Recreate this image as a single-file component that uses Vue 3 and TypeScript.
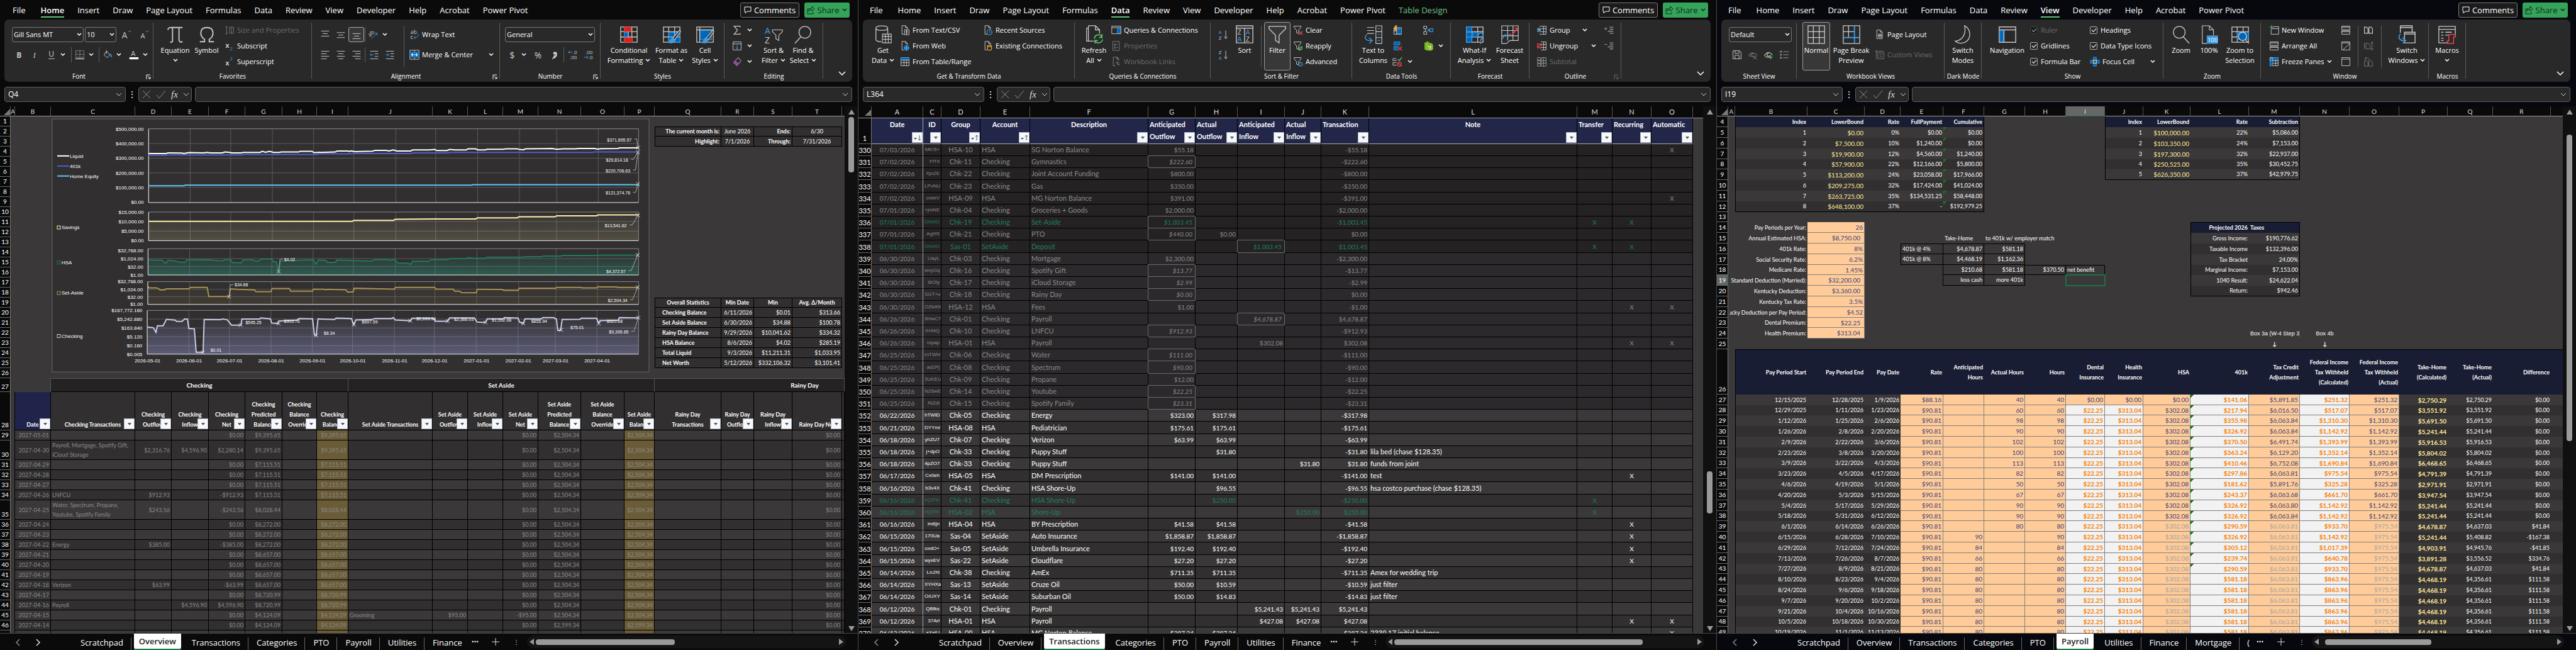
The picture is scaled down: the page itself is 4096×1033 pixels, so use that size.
<script setup lang="ts">
interface Cell { t: string; k: string; s: number; f: string }
interface Row { n: string; k: string; cells: Cell[] }
interface Tool { w?: number; i?: string; l?: string; chev?: boolean; off?: boolean; on?: boolean; kind?: string; name?: string }
interface Col { t: string; w: number; i?: string; lines?: string[]; chev?: boolean; box?: boolean; items?: Tool[]; rows?: Tool[][] }
interface Group { name: string; w: number; pad: number; launch?: string; cols: Col[] }
interface Win {
  id: string; active: string; tabs: string[]; groups: Group[]; ref: string
  cols: number[]; letters: string[]; rows: Row[]; sel: string
  sheet: string; sheets: string[]; more: string; vTop: number; vSize: number; hStart: number; hSize: number
}

/* ---------- icons ---------- */
const G = '#c8c8c8', B = '#3d9be0', F = '#0067b8', R = '#e5484d', N = '#5ec269', D = '#777'
const p = (d: string, c = G, w = 1.2, f = 'none') => `<path d="${d}" stroke="${c}" stroke-width="${w}" fill="${f}"/>`
const tx = (x: number, y: number, s: number, v: string, c = G, more = '') =>
  `<text x="${x}" y="${y}" font-size="${s}" fill="${c}" font-family="Open Sans, sans-serif" ${more}>${v}</text>`
const doc = p('M4 1h7l4 4v3M4 1v17h4M11 1v4h4')
const grid3 = (c = G) => p('M2 3h28v26H2zM11 3v26M21 3v26M2 11h28M2 20h28', c, 1.4)
const funnel = p('M2 2h14v2l-5 6v7l-4-2v-5L2 4z')
const brush = p('M30 8L18 22l3 3L31 11z', G, 1.3, '#292929') + p('M17 22c-4 0-3 6-7 7c5 3 11 1 11-4z', B, 1, B)
const lines = (a: number[][]) => p(a.map(([x, y, w]) => `M${x} ${y}h${w}`).join(''))
const small: Record<string, string> = {
  grow: tx(1, 17, 17, 'A') + p('M14 5l2.500-3l2.500 3', B),
  shrink: tx(3, 17, 14, 'A') + p('M14 2l2.500 3l2.500-3', B),
  bold: tx(4, 16, 15, 'B', G, 'font-weight="700"'),
  italic: tx(6, 16, 15, 'I', G, 'font-style="italic" style="font-family:Liberation Serif,serif"'),
  under: tx(4, 14, 15, 'U') + p('M4 18h12'),
  border: p('M2 2h16v13H2zM10 2v14M2 9h16', G, 1.2).replace('/>', ' stroke-dasharray="1.500 1.500"/>') + p('M1 18h18', G, 1.8),
  bucket: p('M8 3l7 7l-6 6l-6-6zM8 1v7') + p('M15 9c3 1 3 4 2 6', B, 2),
  fontcolor: tx(4, 13, 14, 'A') + p('M1 17h18', '#fff', 4),
  size: p('M4 2v16M2 4l2-2l2 2M2 16l2 2l2-2M10 4h8v12h-8zM14 4v12', D),
  sub: tx(2, 14, 13, 'x', G, 'font-weight="700"') + tx(11, 19, 9, '2', B),
  sup: tx(2, 17, 13, 'x', G, 'font-weight="700"') + tx(11, 8, 9, '2', B),
  top: lines([[2, 3, 16], [5, 8, 10], [2, 13, 16]]), mid: lines([[2, 6, 16], [5, 11, 10], [2, 16, 16]]),
  bot: lines([[2, 8, 16], [5, 13, 10], [2, 18, 16]]),
  orient: tx(0, 12, 11, 'ab', G, 'transform="rotate(-45 5 10)"') + p('M6 18L17 7M12 7h5v5', B),
  left: lines([[2, 3, 16], [2, 8, 11], [2, 13, 16], [2, 18, 11]]), center: lines([[2, 3, 16], [5, 8, 10], [2, 13, 16], [5, 18, 10]]),
  right: lines([[2, 3, 16], [7, 8, 11], [2, 13, 16], [7, 18, 11]]),
  outdent: lines([[2, 3, 16], [11, 8, 7], [11, 13, 7], [2, 18, 16]]) + p('M9 10H2M5 7l-3 3l3 3', B),
  indent: lines([[2, 3, 16], [11, 8, 7], [11, 13, 7], [2, 18, 16]]) + p('M1 10h7M5 7l3 3l-3 3', B),
  wrap: tx(2, 9, 11, 'ab') + tx(2, 19, 11, 'c') + p('M17 8c2 6-2 8-8 8M12 13l-3 3l3 3', B),
  merge: p('M1 1h18v18H1zM10 1v4M10 15v4', G) + p('M1 5h18v10H1z', B, 1, F) + p('M4 10h12M7 7l-3 3l3 3M13 7l3 3l-3 3', '#fff', 1.4),
  dollar: tx(4, 17, 18, '$'), percent: tx(1, 17, 17, '%'), comma: p('M12 5c3 4 1 9-4 11c2-3 2-4 2-5', G, 3) + `<circle cx="10" cy="7" r="3" fill="${G}"/>`,
  decinc: tx(10, 9, 10, '.0') + tx(4, 19, 10, '.00') + p('M9 5H1M4 2L1 5l3 3', B),
  decdec: tx(4, 9, 10, '.00') + tx(10, 19, 10, '.0') + p('M1 15h8M6 12l3 3l-3 3', B),
  sigma: p('M16 4V2H4l7 8l-7 8h12v-2', G, 1.5), fill: p('M2 2h16v16H2zM2 6h16') + p('M10 8v8M7 13l3 3l3-3', B),
  clear: p('M12 2l6 6l-8 10l-7-6z', G) + p('M6 8l7 6l-3 4l-7-6z', '#c050c8', 1, '#a13bab'),
  csv: doc + p('M9 9h9v10H9zM11 12h5M11 15h5M13 9v10'), web: doc + `<circle cx="13" cy="14" r="5" fill="${F}" stroke="${B}"/>` + p('M8 14h10M13 9v10', '#9bd0f5', 1),
  range: p('M2 2h16v16H2zM2 7h16M2 12h16M8 7v11M13 7v11') + p('M2 2h16v4H2z', B, 1, F),
  recent: doc + `<circle cx="13" cy="14" r="5" fill="#292929" stroke="${B}" stroke-width="1.500"/>` + p('M13 11v3h3', B),
  exist: doc + p('M9 10c0-2 8-2 8 0v7c0 2-8 2-8 0zM9 10c0 2 8 2 8 0', '#e8a33d', 1.5),
  queries: p('M1 2h18v15H1zM1 5h18') + p('M12 6h6v10h-6z', B, 1, F), props: p('M3 1h13v18H3zM6 6h3v3H6zM6 12h3v3H6zM11 7h3M11 13h3', D),
  links: p('M4 1h7l4 4v3M4 1v17h4M11 1v4h4M9 13c3-4 6-2 4 1M17 14c-3 4-6 2-4-1', D, 1.4),
  az: tx(1, 9, 10, 'A', B) + tx(1, 20, 10, 'Z') + p('M15 2v16M12 14l3 4l3-4'), za: tx(1, 9, 10, 'Z') + tx(1, 20, 10, 'A', B) + p('M15 2v16M12 14l3 4l3-4'),
  fclear: funnel + p('M12 12l7 7M19 12l-7 7', R, 1.6), freapply: funnel + p('M12 15c1-4 5-4 6-1M18 15c-1 4-5 4-6 1M18 11v3h-3M12 19v-3h3', N, 1.4),
  fadv: funnel + `<circle cx="15" cy="15" r="3.500" fill="none" stroke="${B}" stroke-width="2.500" stroke-dasharray="2 1"/>`,
  flash: p('M3 5h15v13H3zM8 5v13M13 5v13M3 11h15') + p('M9 8h9v9H9z', B, 1, F) + p('M6 1L3 8h3l-2 5l6-7H7l2-5z', '#f0b040', 1, '#f0b040'),
  dup: p('M3 2h12v6H3z', B, 1, F) + p('M3 11h7v7H3z', B, 1, F) + p('M11 11l8 8M19 11l-8 8', R, 1.6),
  valid: p('M8 4H1v4h8M8 12H1v5h7') + p('M11 5l3 3l5-7', N, 1.6) + `<circle cx="14" cy="15" r="4" fill="none" stroke="${R}" stroke-width="1.600"/>` + p('M11 12l6 6', R, 1.6),
  consol: p('M1 2h6v5H1zM1 13h6v5H1zM4 7v6') + p('M7 10h5M10 8l2 2l-2 2M13 7h6v6h-6z', B, 1.4),
  model: p('M3 4l7-3v18l-7-2z', '#7ab51d', 1, '#7ab51d') + p('M7 6c3-3 11-2 12 2v9c-3 3-9 2-12 0z', '#9bd33a', 1, '#76b01c') + p('M10 9v3h5V9M10 15h3M15 12v5', '#fff'),
  group: p('M8 2h5v16H8M13 2h5v16h-5M8 7h10M8 13h10M8 2H5M8 18H5') + p('M1 6h6v7H1z', B, 1.3) + p('M4 7v5M2 9h4', '#fff'),
  ungroup: p('M8 2h5v16H8M13 2h5v16h-5M8 7h10M8 13h10') + p('M1 6h7v8H1zM1 14l7-8', R, 1.6), subtotal: p('M1 2h6v5H1zM1 8h6v5H1zM1 14h6v5H1zM9 2h9v17H9zM9 8h9M9 13h9M13 2v17', '#999'),
  show: lines([[12, 4, 7], [12, 8, 7], [8, 12, 11], [12, 16, 7]]) + p('M1 7h6M4 4v6', '#999'), hide: lines([[12, 4, 7], [12, 8, 7], [8, 12, 11], [12, 16, 7]]) + p('M1 7h6', '#999'),
  save: p('M2 2h13l3 3v13H2zM6 2v5h8V2M6 18v-7h8v7'), eyex: p('M2 11c4-6 12-6 16 0M6 14c-2-1-3-2-4-3M10 8a3 3 0 1 0 3 4M11 12l7 7M18 12l-7 7', '#999'),
  eyeadd: p('M2 11c4-7 12-7 16 0M2 11c2 3 4 4 8 4M10 7a3 3 0 1 0 3 4', '#fff') + p('M14 11v8M10 15h8', N, 1.6),
  list: p('M2 3h3v2H2zM2 9h3v2H2zM2 15h3v2H2zM8 4h11M8 10h11M8 16h11', '#999'), page: doc + p('M15 8v10H8M7 9h6v6H7zM10 9v6M7 12h6'),
  custom: p('M3 1v18M1 3h17M6 6h12v12H6zM9 10h6M9 14h6', D), focus: p('M7 1h6v18H7zM1 7h18v6H1z', B, 1, F) + p('M7 7h6v6H7z', '#fff', 1, '#5b5520'),
  newwin: p('M8 3h11v15H4V9M4 7h15') + p('M5 0v9M1 4h8', N, 1.4), arrange: p('M2 2h16v7H2zM2 11h16v7H2zM2 4h16M2 13h16'),
  freeze: p('M2 2h16v16H2zM7 2v16M13 2v16M2 8h16M2 13h16') + p('M8 2h10v5H8zM2 8h5v10H2z', B, 1, F) + p('M4 0v8M0 2l8 4M8 2L0 6', B),
  split: p('M2 2h16v7H2zM2 11h16v7H2zM2 4h16M2 13h16'), hidew: p('M2 2h16v16H2zM2 4h16M4 18L18 5'), unhide: p('M2 2h16v16H2zM2 5h16'),
  side: p('M2 4h4l3 3v9H2zM11 4h4l3 3v9h-7z', G, 1.5), sync: p('M2 3v13M5 5h5l3 3v8H5zM17 2v16M15 5l2-3l2 3M15 15l2 3l2-3', D), reset: p('M2 8h4l3 3v8H2zM11 8h4l3 3v8h-7zM3 4c4-3 8-1 8 2M5 1L3 4l3 2', D),
}
const big: Record<string, string> = {
  pi: p('M3 8c1-4 3-4 6-4h19M11 4v23c0 2-2 2-4 2M22 4v21c0 4 3 4 6 3', G, 2), omega: p('M4 28h8v-4C3 18 3 4 16 4s13 14 4 20v4h8', G, 2),
  cond: grid3() + p('M8 3h12v8H8z', R, 1, '#d8231c') + p('M8 21h14v8H8z', R, 1, '#d8231c') + p('M8 12h7v8H8z', B, 1, F) + p('M15 11v10'),
  fmt: grid3() + p('M11 12h19v17H11z', B, 1, F) + p('M21 12v17M11 20h19') + brush, cell: p('M2 3h28v26H2zM2 8h28M7 3v26', G, 1.4) + p('M8 9h19v16H8z', B, 1, F) + brush,
  sort: tx(1, 15, 15, 'A', B) + tx(1, 31, 15, 'Z') + p('M14 8h17v3l-6 6v9l-5-3v-6l-6-6z'), find: `<circle cx="19" cy="12" r="10" fill="none" stroke="${G}" stroke-width="1.500"/>` + p('M12 20L2 31', G, 1.5),
  get: p('M4 5c0-5 20-5 20 0v9M4 5v19c0 3 5 4 9 4M4 5c0 5 20 5 20 0', G, 1.4) + p('M15 15h15v15H15zM15 19h15M15 24h15M20 15v15M25 15v15', G),
  refresh: p('M6 5h-3v22h12M6 1h12l7 7v6M6 1v26M18 1v7h7', G, 1.4) + p('M16 23c1-8 11-9 13-2M30 24c-1 7-10 8-13 2M29 15v6h-5M17 31v-5h5', N, 1.8),
  sortdlg: p('M2 1h28v29H2zM2 5h28M16 5v25', G, 1.5) + tx(4, 16, 11, 'Z') + tx(4, 28, 11, 'A', B) + tx(18, 16, 11, 'A', B) + tx(18, 28, 11, 'Z'),
  filter: p('M2 2h28v4L19 17v13l-6-4v-9L2 6z', G, 1.5), ttc: p('M5 4h12M5 9h12M5 14h12', G) + p('M20 1h10v30H20zM20 11h10M20 21h10', G) + p('M23 6h4M23 16h4M23 26h4', B) + p('M5 16c-6 5-3 11 8 10M8 21l6 5l-5 5', B, 1.5),
  whatif: grid3() + p('M2 3h9v8H2zM2 12h9v8H2zM2 20h9v9H2zM12 12h9v8h-9z', B, 1, F) + p('M22 17c1-6 9-5 8 1c0 4-4 4-4 9M26 30v2', B, 2),
  forecast: p('M2 1h28v25H16l-6 5H2zM12 1v25M21 1v25M2 9h28M2 18h28') + p('M3 23l5-7l4 4l4-5', B, 1.6) + p('M15 16l4 1l10-12M23 5h6v6', R, 1.6),
  normal: p('M2 1h28v30H2zM11 1v30M21 1v30M2 11h28M2 21h28', G, 1.4), pbreak: p('M2 1h28v30H2zM11 1v20M2 11h19', G, 1.4) + p('M21 1v30M2 21h28', B, 2),
  moon: p('M19 1c11 6 12 22 1 28C13 32 6 30 3 27C16 26 22 14 19 1z', G, 1.4), nav: p('M2 3h28v26H2zM2 8h28M10 8v21', G, 1.5) + p('M3 9h6v19H3z', B, 1, F),
  zoom: `<circle cx="13" cy="12" r="10" fill="none" stroke="${G}" stroke-width="1.500"/>` + p('M20 20L30 31', G, 1.5),
  hundred: p('M12 31H4V1h12l7 7v9M16 1v7h7') + p('M12 18h18v13H12z', B, 1, B) + tx(13, 29, 10, '100', '#fff'),
  zoomsel: grid3() + p('M11 12h19v12H11z', B, 1, F) + `<circle cx="20" cy="19" r="7" fill="${F}" stroke="${G}" stroke-width="1.500"/>` + p('M25 25l6 6', G, 1.5),
  switchw: p('M5 1h20v11M5 1v12M5 4h20', G, 1.5) + p('M12 12h18v18H12zM12 15h18', G, 1.5) + p('M5 15c-5 6-1 12 8 11M9 21l5 5l-5 5', B, 1.8),
  macros: p('M2 2h28v16M2 2v28h16M2 7h28M6 12h4M13 12h11M6 17h4M13 17h6M6 22h4M6 26h4', G, 1.4) + p('M19 16h11v4h-3v11H16v-4h3z', R, 1.6),
}

/* ---------- ribbons ---------- */
const bigC = (i: string, w: number, l: string, chev = false, box = false): Col => ({ t: 'big', i, w, lines: l.split('|'), chev, box })
const stack = (w: number, items: Tool[]): Col => ({ t: 'stack', w, items })
const rowsC = (w: number, ...rows: Tool[][]): Col => ({ t: 'rows', w, rows })
const ic = (i: string, w = 25, on = false): Tool => ({ i, w, on, kind: 'mini' })
const dr = (i: string): Tool => ({ i, w: 42, chev: true, kind: 'drop' })
const sp: Tool = { kind: 'sep' }
const st = (i: string, l = '', chev = false, off = false): Tool => ({ i, l, chev, off, kind: 'tool' })
const ck = (l: string, off = false): Tool => ({ l, off, kind: 'check' })
const tall: Col = { t: 'sep', w: 1 }

const ribbon1: Group[] = [
  { name: 'Font', w: 237, pad: 12, launch: 'on', cols: [rowsC(224,
    [{ kind: 'select', w: 114, l: 'Gill Sans MT', name: 'Font' }, { kind: 'select', w: 50, l: '10', name: 'Font size' }, ic('grow', 28), ic('shrink', 28)],
    [ic('bold', 24), ic('italic', 27), dr('under'), sp, dr('border'), sp, dr('bucket'), dr('fontcolor')])] },
  { name: 'Favorites', w: 252, pad: 9, cols: [bigC('pi', 51, 'Equation|', true), bigC('omega', 49, 'Symbol'),
    stack(140, [st('size', 'Size and Properties', false, true), st('sub', 'Subscript'), st('sup', 'Superscript')])] },
  { name: 'Alignment', w: 299, pad: 8, launch: 'on', cols: [rowsC(134,
    [ic('top'), ic('mid'), ic('bot', 25, true), sp, dr('orient')], [ic('left'), ic('center'), ic('right'), sp, ic('outdent'), ic('indent')]),
    tall, rowsC(142, [st('wrap', 'Wrap Text')], [{ ...st('merge', 'Merge & Center', true), w: 138 }])] },
  { name: 'Number', w: 160, pad: 8, launch: 'on', cols: [rowsC(148, [{ kind: 'select', w: 143, l: 'General', name: 'Number format' }],
    [dr('dollar'), ic('percent', 24), ic('comma', 26), sp, ic('decinc'), ic('decdec')])] },
  { name: 'Styles', w: 197, pad: 8, cols: [bigC('cond', 74, 'Conditional|Formatting', true), bigC('fmt', 61, 'Format as|Table', true), bigC('cell', 46, 'Cell|Styles', true)] },
  { name: 'Editing', w: 157, pad: 8, cols: [stack(46, [st('sigma', '', true), st('fill', '', true), st('clear', '', true)]), bigC('sort', 48, 'Sort &|Filter', true), bigC('find', 46, 'Find &|Select', true)] },
]
const ribbon2: Group[] = [
  { name: 'Get & Transform Data', w: 337, pad: 9, cols: [bigC('get', 46, 'Get|Data', true),
    stack(132, [st('csv', 'From Text/CSV'), st('web', 'From Web'), st('range', 'From Table/Range')]),
    stack(140, [st('recent', 'Recent Sources'), st('exist', 'Existing Connections')])] },
  { name: 'Queries & Connections', w: 216, pad: 7, cols: [bigC('refresh', 47, 'Refresh|All', true),
    stack(150, [st('queries', 'Queries & Connections'), st('props', 'Properties', false, true), st('links', 'Workbook Links', false, true)])] },
  { name: 'Sort & Filter', w: 225, pad: 8, cols: [rowsC(24, [ic('az', 24)], [ic('za', 24)]), bigC('sortdlg', 44, 'Sort'), tall, bigC('filter', 42, 'Filter', false, true),
    stack(80, [st('fclear', 'Clear'), st('freapply', 'Reapply'), st('fadv', 'Advanced')])] },
  { name: 'Data Tools', w: 157, pad: 7, cols: [bigC('ttc', 53, 'Text to|Columns'), stack(49, [st('flash'), st('dup'), st('valid', '', true)]), stack(46, [st('consol'), st('model', '', true)])] },
  { name: 'Forecast', w: 125, pad: 8, cols: [bigC('whatif', 59, 'What-If|Analysis', true), bigC('forecast', 53, 'Forecast|Sheet')] },
  { name: 'Outline', w: 146, pad: 8, launch: 'off', cols: [stack(106, [{ ...st('group', 'Group', true), w: 84 }, { ...st('ungroup', 'Ungroup', true), w: 98 }, st('subtotal', 'Subtotal', false, true)]), stack(26, [st('show'), st('hide')])] },
]
const ribbon3: Group[] = [
  { name: 'Sheet View', w: 120, pad: 12, cols: [rowsC(104, [{ kind: 'select', w: 100, l: 'Default', name: 'Sheet view' }], [ic('save'), ic('eyex'), ic('eyeadd'), ic('list')])] },
  { name: 'Workbook Views', w: 235, pad: 9, cols: [bigC('normal', 44, 'Normal', false, true), bigC('pbreak', 67, 'Page Break|Preview'), rowsC(110, [st('page', 'Page Layout')], [st('custom', 'Custom Views', false, true)])] },
  { name: 'Dark Mode', w: 59, pad: 0, cols: [bigC('moon', 58, 'Switch|Modes')] },
  { name: 'Show', w: 289, pad: 8, cols: [bigC('nav', 65, 'Navigation'), stack(95, [ck('Ruler', true), ck('Gridlines'), ck('Formula Bar')]), stack(116, [ck('Headings'), ck('Data Type Icons'), { ...st('focus', 'Focus Cell', true), w: 108 }])] },
  { name: 'Zoom', w: 155, pad: 4, cols: [bigC('zoom', 48, 'Zoom'), bigC('hundred', 41, '100%'), bigC('zoomsel', 57, 'Zoom to|Selection')] },
  { name: 'Window', w: 267, pad: 9, cols: [stack(114, [st('newwin', 'New Window'), st('arrange', 'Arrange All'), { ...st('freeze', 'Freeze Panes', true), w: 104 }]), stack(27, [st('split'), st('hidew'), st('unhide')]), tall,
    stack(28, [st('side'), st('sync', '', false, true), st('reset', '', false, true)]), tall, bigC('switchw', 72, 'Switch|Windows', true)] },
  { name: 'Macros', w: 59, pad: 0, cols: [bigC('macros', 58, 'Macros|', true)] },
]

/* ---------- sheets ---------- */
const c = (t = '', k = '', s = 1, f = ''): Cell => ({ t, k, s, f })

function overviewRows(): Row[] {
  const rows: Row[] = []
  const stats: Record<number, string[]> = {
    2: ['The current month is:', 'June 2026', 'Ends:', '6/30'], 3: ['Highlight:', '7/1/2026', 'Through:', '7/31/2026'],
    19: ['Overall Statistics', 'Min Date', 'Min', 'Avg. Δ/Month'], 20: ['Checking Balance', '6/11/2026', '$0.01', '$313.66'],
    21: ['Set Aside Balance', '6/30/2026', '$34.88', '$100.78'], 22: ['Rainy Day Balance', '9/29/2026', '$10,041.62', '$334.32'],
    23: ['HSA Balance', '8/6/2026', '$4.02', '$285.19'], 24: ['Total Liquid', '9/3/2026', '$11,211.31', '$1,033.95'], 25: ['Net Worth', '5/12/2026', '$332,106.32', '$3,101.41'],
  }
  for (let n = 1; n <= 26; n++) {
    const s = stats[n]
    const edge = n === 2 || n === 19 ? ' edge' : ''
    const kinds = n < 4 ? ['bx b r', 'bx m', 'bx b r', 'bx m'] : n === 19 ? ['bx b m', 'bx b m', 'bx b m', 'bx b m'] : ['bx b name', 'bx r', 'bx r', 'bx r']
    rows.push({ n: String(n), k: '', cells: s ? [c('', '', 16), ...s.map((t, i) => c(t, kinds[i] + edge)), c()] : [c('', '', 21)] })
  }
  rows.push({ n: '27', k: 'band', cells: [c('', 'bare', 2), c('Checking', 'b m', 7), c('Set Aside', 'b m', 7), c('Rainy Day', 'b rainy', 5)] })
  const heads = ['Date', 'Checking Transactions', 'Checking\nOutflow', 'Checking\nInflow', 'Checking\nNet', 'Checking\nPredicted\nBalance', 'Checking\nBalance\nOverride', 'Checking\nBalance',
    'Set Aside Transactions', 'Set Aside\nOutflow', 'Set Aside\nInflow', 'Set Aside\nNet', 'Set Aside\nPredicted\nBalance', 'Set Aside\nBalance\nOverride', 'Set Aside\nBalance',
    'Rainy Day\nTransactions', 'Rainy Day\nOutflow', 'Rainy Day\nInflow', 'Rainy Day Net']
  rows.push({ n: '28', k: 'heads', cells: [c('', 'bare'), ...heads.map((t, i) => c(t, i ? 'hd' : 'hd navy', 1, 'v')), c('', 'hd')] })
  const data = `29|2027-05-01||||$0.00|$9,395.65
30|2027-04-30|Payroll, Mortgage, Spotify Gift,\\niCloud Storage|$2,316.76|$4,596.90|$2,280.14|$9,395.65
31|2027-04-29||||$0.00|$7,115.51
32|2027-04-28||||$0.00|$7,115.51
33|2027-04-27||||$0.00|$7,115.51
34|2027-04-26|LNFCU|$912.93||-$912.93|$7,115.51
35|2027-04-25|Water, Spectrum, Propane,\\nYoutube, Spotify Family|$243.56||-$243.56|$8,028.44
36|2027-04-24||||$0.00|$8,272.00
37|2027-04-23||||$0.00|$8,272.00
38|2027-04-22|Energy|$385.00||-$385.00|$8,272.00
39|2027-04-21||||$0.00|$8,657.00
40|2027-04-20||||$0.00|$8,657.00
41|2027-04-19||||$0.00|$8,657.00
42|2027-04-18|Verizon|$63.99||-$63.99|$8,657.00
43|2027-04-17||||$0.00|$8,720.99
44|2027-04-16|Payroll||$4,596.90|$4,596.90|$8,720.99
45|2027-04-15||||$0.00|$4,124.09
46|2027-04-14||||$0.00|$4,124.09
||||||`
  data.split('\n').forEach((line, i) => {
    const [n, d, t, o, inf, net, bal] = line.split('|').map(v => v.replace('\\n', '\n'))
    const sa = n === '45' ? ['Grooming', '$95.00', '-$95.00', '$2,504.34'] : n === '' ? ['', '', '', ''] : ['', '', '$0.00', n === '46' ? '$2,599.34' : '$2,504.34']
    rows.push({ n, k: (i % 2 ? 'dk' : 'lt') + ' dim' + (t.includes('\n') ? ' double' : ''), cells: [c('', 'bare'), c(d, 'r'), c(t, 'txt'), c(o, 'r'), c(inf, 'r'), c(net, 'r'), c(bal, 'r'), c(), c(bal, 'r gold'),
      c(sa[0], 'txt'), c(sa[1], 'r'), c(), c(sa[2], 'r'), c(sa[3], 'r'), c(), c(sa[3], 'r gold'), c(), c(), c(), c(n === '' ? '' : '$0.00', 'r'), c()] })
  })
  return rows
}

function transactionRows(): Row[] {
  const rows: Row[] = [{ n: '1', k: 'heads', cells: [
    c('Date', 'm', 1, 'down'), c('ID', 'm', 1, 'v'), c('Group', 'm', 1, 'up'), c('Account', 'm', 1, 'up'), c('Description', 'm', 1, 'v'), c('Anticipated\nOutflow', '', 1, 'v'), c('Actual\nOutflow', '', 1, 'v'),
    c('Anticipated\nInflow', '', 1, 'v'), c('Actual\nInflow', '', 1, 'v'), c('Transaction', '', 1, 'v'), c('Note', 'm', 1, 'v'), c('Transfer', '', 1, 'v'), c('Recurring', '', 1, 'v'), c('Automatic', '', 1, 'v'), c('', 'bare')] }]
  const data = `330|07/03/2026|MK/5+|HSA-10|HSA|SG Norton Balance|$55.18||||-$55.18||||X
331|07/02/2026|FfTlI|Chk-11|Checking|Gymnastics|*$222.60||||-$222.60||||
332|07/02/2026|XjoZE|Chk-22|Checking|Joint Account Funding|$800.00||||-$800.00||||
333|07/02/2026|LPvNU|Chk-23|Checking|Gas|$350.00||||-$350.00||||
334|07/02/2026|oxkkV|HSA-09|HSA|MG Norton Balance|$391.00||||-$391.00||||X
335|07/01/2026|+jmNE|Chk-04|Checking|Groceries + Goods|$2,000.00||||-$2,000.00||||
336|07/01/2026|GKkfO|Chk-19|Checking|Set-Aside|*$1,003.45||||-$1,003.45||X|X|
337|07/01/2026|Agt95|Chk-21|Checking|PTO|*$440.00|$0.00|||$0.00||||
338|07/01/2026|GKkfO|Sas-01|SetAside|Deposit|||*$1,003.45||$1,003.45||X|X|
339|06/30/2026|LlayL|Chk-03|Checking|Mortgage|$2,300.00||||-$2,300.00||||
340|06/30/2026|wxyGq|Chk-16|Checking|Spotify Gift|*$13.77||||-$13.77||||
341|06/30/2026|l6Oty|Chk-17|Checking|iCloud Storage|*$2.99||||-$2.99||||
342|06/30/2026|SGT+u|Chk-18|Checking|Rainy Day|*$0.00||||$0.00||||
343|06/30/2026|OZbAN|HSA-12|HSA|Fees|$1.00||||-$1.00|||X|X
344|06/26/2026|9HwC7|Chk-01|Checking|Payroll|||*$4,678.87||$4,678.87||||
345|06/26/2026|/H44Q|Chk-10|Checking|LNFCU|*$912.93||||-$912.93||||
346|06/26/2026|n/pap|HSA-01|HSA|Payroll|||$302.08||$302.08|||X|X
347|06/25/2026|rnTWH|Chk-06|Checking|Water|*$111.00||||-$111.00||||
348|06/25/2026|ad2Pj|Chk-08|Checking|Spectrum|*$90.00||||-$90.00||||
349|06/25/2026|3UKEU|Chk-09|Checking|Propane|$12.00||||-$12.00||||
350|06/25/2026|NZ6wE|Chk-14|Checking|Youtube|*$22.25||||-$22.25||||
351|06/25/2026|RiZdt|Chk-15|Checking|Spotify Family|*$23.31||||-$23.31||||
352|06/22/2026|hTWlD|Chk-05|Checking|Energy|$323.00|$317.98|||-$317.98||||
353|06/21/2026|DYYm/|HSA-08|HSA|Pediatrician|$175.61|$175.61|||-$175.61||||
354|06/18/2026|yhZU7|Chk-07|Checking|Verizon|$63.99|$63.99|||-$63.99||||
355|06/18/2026|j+dpO|Chk-33|Checking|Puppy Stuff||$31.80|||-$31.80|lila bed (chase $128.35)|||
356|06/18/2026|4pZO7|Chk-33|Checking|Puppy Stuff||||$31.80|$31.80|funds from joint|||
357|06/17/2026|Cx0eh|HSA-05|HSA|DM Prescription|$141.00|$141.00|||-$141.00|test||X|
358|06/16/2026|b3v4X|Chk-41|Checking|HSA Shore-Up||$96.55|||-$96.55|hsa costco purchase (chase $128.35)|||
359|06/16/2026|rQ2FK|Chk-41|Checking|HSA Shore-Up||$250.00|||-$250.00||X||
360|06/16/2026|rQ2FK|HSA-02|HSA|Shore-Up||||$250.00|$250.00||X||
361|06/16/2026|lm6jn|HSA-04|HSA|BY Prescription|$41.58|$41.58|||-$41.58|||X|
362|06/15/2026|170Ua|Sas-04|SetAside|Auto Insurance|$1,858.87|$1,858.87|||-$1,858.87|||X|
363|06/15/2026|oxdO+|Sas-05|SetAside|Umbrella Insurance|$192.40|$192.40|||-$192.40|||X|
364|06/15/2026|wyxEV|Sas-22|SetAside|Cloudflare|$27.20|$27.20|||-$27.20|||X|
365|06/14/2026|LnJXt|Chk-38|Checking|AmEx|$711.35|$711.35|||-$711.35|Amex for wedding trip|||
366|06/14/2026|XYHXa|Sas-13|SetAside|Cruze Oil|$50.00|$10.59|||-$10.59|just filter|||
367|06/14/2026|O/UXY|Sas-14|SetAside|Suburban Oil|$50.00|$14.83|||-$14.83|just filter|||
368|06/12/2026|QBfks|Chk-01|Checking|Payroll|||$5,241.43|$5,241.43|$5,241.43||||
369|06/12/2026|37Arl|HSA-01|HSA|Payroll|||$427.08|$427.08|$427.08|||X|X
370|06/12/2026|aXelU|HSA-09|HSA|MG Norton Balance|$387.24|$387.24|||-$387.24|2339.17 initial balance|||X`
  const kinds = ['m', 'id', 'm txt', 'txt', 'txt', 'r', 'r', 'r', 'r', 'r', 'txt', 'm', 'm', 'm']
  data.split('\n').forEach((line, i) => {
    const [n, ...v] = line.split('|')
    const tone = i < 9 ? 'july dim' : i < 22 ? 'june dim' : i % 2 ? 'dk' : 'lt'
    rows.push({ n, k: tone + (v[11] === 'X' ? ' transfer' : ''), cells: [...v.map((t, j) => c(t.replace('*', ''), kinds[j] + (t.startsWith('*') ? ' calc' : ''))), c('', 'bare')] })
  })
  return rows
}

function payrollRows(): Row[] {
  const rows: Row[] = []
  const tax = [['$0.00', '0%', '$0.00', '$0.00'], ['$7,500.00', '10%', '$1,240.00', '$0.00'], ['$19,900.00', '12%', '$4,560.00', '$1,240.00'], ['$57,900.00', '22%', '$12,166.00', '$5,800.00'],
    ['$113,200.00', '24%', '$23,058.00', '$17,966.00'], ['$209,275.00', '32%', '$17,424.00', '$41,024.00'], ['$263,725.00', '35%', '$134,531.25', '$58,448.00'], ['$648,100.00', '37%', '-', '$192,979.25']]
  const sub = [['$100,000.00', '22%', '$5,086.00'], ['$103,350.00', '24%', '$7,153.00'], ['$197,300.00', '32%', '$22,937.00'], ['$250,525.00', '35%', '$30,452.75'], ['$626,350.00', '37%', '$42,979.75']]
  const h = (t: string, k = '') => c(t, 'r b navy ' + k)
  rows.push({ n: '4', k: '', cells: [c(), h('Index', 'le'), h('LowerBound'), h('Rate'), h('FullPayment'), h('Cumulative', 're'), c('', '', 3), h('Index', 'le'), h('LowerBound'), h('Rate'), h('Subtraction', 're'), c('', '', 6)] })
  tax.forEach((v, i) => {
    const z = i % 2 ? 'zd ' : 'zl '
    const s = sub[i], bot = i === 7 ? ' bo' : '', bot2 = i === 4 ? ' bo' : ''
    rows.push({ n: String(i + 5), k: '', cells: [c(), c(String(i + 1), z + 'r le' + bot), c(v[0], z + 'r yellow' + bot), c(v[1], z + 'r' + bot), c(v[2], z + 'r' + bot), c(v[3], z + 'r tri re' + bot), c('', '', 3),
      ...(s ? [c(String(i + 1), z + 'r le' + bot2), c(s[0], z + 'r yellow' + bot2), c(s[1], z + 'r' + bot2), c(s[2], z + 'r re' + bot2)] : [c('', '', 4)]), c('', '', 6)] })
  })
  rows.push({ n: '13', k: '', cells: [c('', '', 19)] })
  const inputs = [['Pay Periods per Year:', '26'], ['Annual Estimated HSA:', '$8,750.00 '], ['401k Rate:', '8%'], ['Social Security Rate:', '6.2%'], ['Medicare Rate:', '1.45%'], ['Federal Standard Deduction (Married):', '$32,200.00 '],
    ['Kentucky Deduction:', '$3,360.00 '], ['Kentucky Tax Rate:', '3.5%'], ['Kentucky Deduction per Pay Period:', '$4.52'], ['Dental Premium:', '$22.25 '], ['Health Premium:', '$313.04 ']]
  const proj = [['Projected 2026', 'Taxes'], ['Gross Income:', '$190,776.62'], ['Taxable Income', '$132,396.00'], ['Tax Bracket', '24.00%'], ['Marginal Income:', '$7,153.00'], ['1040 Result:', '$24,622.04'], ['Return:', '$942.46']]
  const compare: Record<number, Cell[]> = {
    15: [c(), c('Take-Home'), c('to 401k w/ employer match', 'spill', 2), c()], 16: [c('401k @ 4%', 'bx le to'), c('$4,678.87', 'bx r to'), c('$581.18', 'bx r to'), c(), c()],
    17: [c('401k @ 8%', 'bx le'), c('$4,468.19', 'bx r'), c('$1,162.36', 'bx r'), c(), c()], 18: [c('', 're'), c('$210.68', 'bx r'), c('$581.18', 'bx r'), c('$370.50', 'bx r to'), c('net benefit', 'bx to')],
    19: [c('', 're'), c('less cash', 'bx r'), c('more 401k', 'bx r'), c(), c('', 'picked')],
  }
  inputs.forEach(([l, v], i) => {
    const n = i + 14, q = proj[i], z = i % 2 ? 'zl ' : 'zd '
    const right = n === 24 ? [c('', '', 3), c('Box 3a (W-4 Step 3)', 'arial clip'), c('Box 4b', 'arial m'), c('', '', 5)]
      : [c('', '', 2), ...(q ? [c(q[0], i ? z + 'r le' + (i === 6 ? ' bo' : '') : 'navy b r le to'), c(q[1], i ? z + 'r re' + (i === 6 ? ' bo' : '') : 'navy b re to')] : [c('', '', 2)]), c('', '', 6)]
    rows.push({ n: String(n), k: '', cells: [c(l, 'over', 2), c(v.trim(), 'input r' + (v.endsWith(' ') ? ' acct' : '')), c(), ...(compare[n] ?? [c('', '', 5)]), ...right] })
  })
  rows.push({ n: '25', k: '', cells: [c('', '', 12), c('↓', 'm b'), c('↓', 'm b'), c('', '', 5)] })
  const heads = ['Pay Period Start', 'Pay Period End', 'Pay Date', 'Rate', 'Anticipated\nHours', 'Actual Hours', 'Hours', 'Dental\nInsurance', 'Health\nInsurance', 'HSA', '401k', 'Tax Credit\nAdjustment',
    'Federal Income\nTax Withheld\n(Calculated)', 'Federal Income\nTax Withheld\n(Actual)', 'Take-Home\n(Calculated)', 'Take-Home\n(Actual)', 'Difference']
  rows.push({ n: '26', k: 'heads', cells: [c(), ...heads.map((t, i) => h(t, 'to' + (i ? '' : ' le'))), c('', 'navy to')] })
  const data = `12/15/2025|12/28/2025|1/9/2026|$88.16||40|40|$0.00|$0.00|$0.00|$141.06|$5,891.85|$251.32|$251.32|$2,750.29|$2,750.29|$0.00
12/29/2025|1/11/2026|1/23/2026|$90.81||60|60|$22.25|$313.04|$302.08|$217.94|$6,016.50|$517.07|$517.07|$3,551.92|$3,551.92|$0.00
1/12/2026|1/25/2026|2/6/2026|$90.81||98|98|$22.25|$313.04|$302.08|$355.98|$6,063.84|$1,310.30|$1,310.30|$5,691.50|$5,691.50|$0.00
1/26/2026|2/8/2026|2/20/2026|$90.81||90|90|$22.25|$313.04|$302.08|$326.92|$6,063.84|$1,142.92|$1,142.92|$5,241.44|$5,241.44|$0.00
2/9/2026|2/22/2026|3/6/2026|$90.81||102|102|$22.25|$313.04|$302.08|$370.50|$6,491.74|$1,393.99|$1,393.99|$5,916.53|$5,916.53|$0.00
2/23/2026|3/8/2026|3/20/2026|$90.81||100|100|$22.25|$313.04|$302.08|$363.24|$6,129.20|$1,352.14|$1,352.14|$5,804.02|$5,804.02|$0.00
3/9/2026|3/22/2026|4/3/2026|$90.81||113|113|$22.25|$313.04|$302.08|$410.46|$6,752.08|$1,690.84|$1,690.84|$6,468.65|$6,468.65|$0.00
3/23/2026|4/5/2026|4/17/2026|$90.81||82|82|$22.25|$313.04|$302.08|$297.86|$6,063.81|$975.54|$975.54|$4,791.39|$4,791.39|$0.00
4/6/2026|4/19/2026|5/1/2026|$90.81||50|50|$22.25|$313.04|$302.08|$181.62|$5,891.76|$325.28|$325.28|$2,971.91|$2,971.91|$0.00
4/20/2026|5/3/2026|5/15/2026|$90.81||67|67|$22.25|$313.04|$302.08|$243.37|$6,063.68|$661.70|$661.70|$3,947.54|$3,947.54|$0.00
5/4/2026|5/17/2026|5/29/2026|$90.81||90|90|$22.25|$313.04|$302.08|$326.92|$6,063.80|$1,142.92|$1,142.92|$5,241.44|$5,241.44|$0.00
5/18/2026|5/31/2026|6/12/2026|$90.81||90|90|$22.25|$313.04|$302.08|$326.92|$6,063.84|$1,142.92|$1,142.92|$5,241.44|$5,241.44|$0.00
6/1/2026|6/14/2026|6/26/2026|$90.81||80|80|$22.25|$313.04|$302.08|$290.59|$6,063.81|$933.70|$975.54|$4,678.87|$4,637.03|$41.84
6/15/2026|6/28/2026|7/10/2026|$90.81|90||90|$22.25|$313.04|$302.08|$326.92|$6,063.81|$1,142.92|$975.54|$5,241.44|$5,408.82|-$167.38
6/29/2026|7/12/2026|7/24/2026|$90.81|84||84|$22.25|$313.04|$302.08|$305.12|$6,063.81|$1,017.39|$975.54|$4,903.91|$4,945.76|-$41.85
7/13/2026|7/26/2026|8/7/2026|$90.81|66||66|$22.25|$313.04|$302.08|$239.74|$6,063.81|$640.78|$975.54|$3,891.28|$3,556.52|$334.76
7/27/2026|8/9/2026|8/21/2026|$90.81|80||80|$22.25|$313.04|$302.08|$290.59|$6,063.81|$933.70|$975.54|$4,678.87|$4,637.03|$41.84
8/10/2026|8/23/2026|9/4/2026
8/24/2026|9/6/2026|9/18/2026
9/7/2026|9/20/2026|10/2/2026
9/21/2026|10/4/2026|10/16/2026
10/5/2026|10/18/2026|10/30/2026
10/19/2026|11/1/2026|11/13/2026`
  const repeat = '|$90.81|80||80|$22.25|$313.04|$302.08|$581.18|$6,063.81|$863.96|$975.54|$4,468.19|$4,356.61|$111.58'
  data.split('\n').forEach((line, i) => {
    const v = (i > 16 ? line + repeat : line).split('|'), z = i % 2 ? 'zd ' : 'zl '
    rows.push({ n: String(i + 27), k: '', cells: [c(), ...v.map((t, j) => {
      let k = z + 'r'
      if (j === 0) k += ' le'
      if (j > 2 && j < 14) k = 'input r'
      if ([7, 8].includes(j) && i > 0) k = 'output r'
      if ([10, 12].includes(j)) k = 'output r'
      if ([9, 11, 13].includes(j) && i > 11) k += ' faded'
      if (j === 10 && i < 17) k += ' tri'
      if (j === 14) k += ' yellow b'
      return c(t, k)
    }), c('', z)] })
  })
  return rows
}

const menu = ['File', 'Home', 'Insert', 'Draw', 'Page Layout', 'Formulas', 'Data', 'Review', 'View', 'Developer', 'Help', 'Acrobat', 'Power Pivot']
const sheetNames = ['Scratchpad', 'Overview', 'Transactions', 'Categories', 'PTO', 'Payroll', 'Utilities', 'Finance']
const wins: Win[] = [
  { id: 'one', active: 'Home', tabs: menu, groups: ribbon1, ref: 'Q4', cols: [17, 7, 57, 134, 58, 59, 58, 59, 55, 50, 134, 56, 56, 56, 68, 69, 48, 106, 52, 61, 79], letters: 'A B C D E F G H I J K L M N O P Q R S T'.split(' '),
    rows: overviewRows(), sel: '', sheet: 'Overview', sheets: sheetNames, more: '', vTop: 0, vSize: 88, hStart: 3, hSize: 221 },
  { id: 'two', active: 'Data', tabs: [...menu, 'Table Design'], groups: ribbon2, ref: 'L364', cols: [21, 82, 29, 62, 79, 188, 75, 67, 75, 58, 76, 331, 56, 62, 66], letters: 'A C D E F G H I J K L M N O'.split(' '),
    rows: transactionRows(), sel: '', sheet: 'Transactions', sheets: sheetNames, more: '', vTop: 563, vSize: 67, hStart: 3, hSize: 395 },
  { id: 'three', active: 'View', tabs: menu, groups: ribbon3, ref: 'I19', cols: [18, 11, 115, 91, 57, 68, 65, 65, 65, 62, 61, 75, 93, 81, 79, 79, 77, 72, 92], letters: 'A B C D E F G H I J K L M N O P Q R'.split(' '),
    rows: payrollRows(), sel: 'I', sheet: 'Payroll', sheets: [...sheetNames, 'Mortgage'], more: '(', vTop: 28, vSize: 487, hStart: 10, hSize: 169 },
]

/* ---------- balance chart ---------- */
const X = (v: number) => Math.round(v * 4.352) / 10
const Y = (v: number) => Math.round(v * 3.291) / 10
const line = (s: string) => s.split(' ').map(q => { const [a, b] = q.split(','); return `${X(+a)},${Y(+b)}` }).join(' ')
const months = [543, 695, 843, 995, 1146, 1293, 1446, 1592, 1745, 1898, 2034, 2186]
const monthNames = ['2026-05-01', '2026-06-01', '2026-07-01', '2026-08-01', '2026-09-01', '2026-10-01', '2026-11-01', '2026-12-01', '2027-01-01', '2027-02-01', '2027-03-01', '2027-04-01']
interface Panel { top: number; bottom: number; x: number; ticks: [number, string][]; color: string; fill: string; pts: string }
const panels: Panel[] = [
  { top: 622, bottom: 978, x: 543, color: '', fill: '', pts: '', ticks: [[622, '$500,000.00'], [693, '$400,000.00'], [764, '$300,000.00'], [835, '$200,000.00'], [905, '$100,000.00'], [976, '$0.00']] },
  { top: 1024, bottom: 1162, x: 543, color: '#fdf0a8', fill: 'gSav', ticks: [[1024, '$15,000.00'], [1070, '$10,000.00'], [1116, '$5,000.00'], [1161, '$0.00']],
    pts: '543,1069 1287,1069 1292,1064 1438,1064 1444,1059 1588,1057 1738,1057 1744,1052 1890,1052 1896,1047 2027,1047 2034,1042 2179,1042 2185,1038 2334,1038' },
  { top: 1201, bottom: 1328, x: 541, color: '#1f7a5a', fill: 'gHsa', ticks: [[1208, '$32,768.00'], [1249, '$1,024.00'], [1287, '$32.00'], [1327, '$1.00']],
    pts: '543,1252 548,1256 592,1257 606,1272 613,1257 638,1260 655,1266 676,1267 682,1256 765,1255 790,1258 815,1260 820,1254 842,1254 850,1269 882,1269 888,1256 925,1256 930,1260 946,1260 955,1251 993,1251 1000,1264 1010,1264 1018,1312 1025,1260 1145,1255 1155,1276 1163,1256 1190,1258 1197,1267 1226,1267 1230,1256 1293,1259 1360,1261 1368,1254 1420,1254 1428,1258 1440,1252 1455,1271 1492,1271 1499,1277 1508,1261 1568,1262 1573,1254 1636,1254 1643,1249 1703,1249 1713,1244 1733,1247 1773,1247 1780,1242 1913,1242 1918,1240 1978,1240 1985,1237 2048,1237 2055,1234 2185,1234 2193,1232 2332,1232' },
  { top: 1360, bottom: 1470, x: 540, color: '#a8904f', fill: 'gSet', ticks: [[1358, '$32,768.00'], [1397, '$1,024.00'], [1433, '$32.00'], [1469, '$1.00']],
    pts: '540,1384 545,1390 572,1390 580,1394 585,1400 602,1400 606,1395 690,1395 696,1388 757,1388 763,1432 837,1432 842,1395 868,1397 930,1400 935,1408 990,1408 994,1393 1057,1393 1062,1406 1142,1406 1145,1396 1185,1397 1190,1400 1195,1397 1262,1399 1270,1410 1290,1410 1294,1392 1440,1396 1445,1388 1588,1388 1593,1396 1656,1396 1661,1406 1680,1406 1686,1413 1740,1414 1744,1397 1835,1398 1840,1402 1893,1402 1897,1392 2030,1392 2034,1388 2123,1388 2128,1390 2180,1390 2186,1384 2198,1386 2253,1386 2258,1388 2332,1388' },
  { top: 1499, bottom: 1710, x: 538, color: '#c9cbe8', fill: 'gChk', ticks: [[1499, '$167,772.160'], [1541, '$5,242.880'], [1584, '$163.840'], [1626, '$5.120'], [1669, '$0.160'], [1710, '$0.005']],
    pts: '540,1578 545,1581 560,1582 570,1605 575,1573 596,1573 608,1542 640,1546 645,1552 665,1552 675,1540 685,1541 690,1586 710,1588 717,1701 742,1701 746,1543 805,1544 812,1541 830,1544 846,1570 880,1570 884,1541 948,1541 953,1535 988,1540 993,1560 1015,1562 1018,1550 1085,1546 1092,1538 1142,1540 1149,1618 1155,1620 1162,1540 1222,1543 1228,1536 1284,1538 1292,1568 1300,1545 1360,1543 1368,1538 1430,1538 1437,1534 1444,1545 1490,1548 1499,1550 1505,1537 1583,1537 1590,1551 1634,1551 1643,1535 1733,1535 1743,1555 1773,1557 1780,1540 1838,1540 1843,1534 1893,1536 1898,1555 1911,1562 1918,1540 1978,1540 1983,1534 2023,1534 2033,1541 2038,1595 2048,1595 2054,1543 2118,1542 2124,1537 2180,1537 2187,1560 2193,1548 2258,1547 2263,1534 2334,1535' },
]
const worth = [
  { c: '#5bc8f0', d: '543,897 672,897 677,894 1722,894 1730,892 2334,892' },
  { c: '#4f60c9', d: '543,750 608,750 613,748 885,748 890,746 1160,746 1163,743 1290,743 1297,741 1500,741 1507,738 1640,738 1643,736 2165,736 2170,734 2334,734' },
  { c: '#ffffff', d: '543,741 608,741 613,738 665,739 672,741 690,737 745,738 755,736 770,738 812,738 822,734 840,736 845,738 880,738 890,736 950,736 958,731 970,735 985,731 1000,736 1020,736 1027,734 1090,734 1097,731 1140,731 1147,737 1160,736 1225,734 1232,729 1270,729 1278,731 1284,729 1295,732 1362,730 1370,726 1412,726 1420,729 1437,724 1450,729 1500,729 1508,724 1568,724 1588,722 1596,727 1633,727 1643,722 1663,724 1703,724 1710,719 1738,719 1746,724 1773,724 1780,721 1838,721 1848,719 1890,719 1898,722 1913,723 1920,719 1983,718 2018,717 2033,721 2058,719 2103,719 2113,717 2173,717 2183,720 2198,718 2258,717 2263,714 2334,714' },
]
const legend = [{ y: 753, t: 'Liquid', c: '#ffffff', l: true }, { y: 802, t: '401k', c: '#4f60c9', l: true }, { y: 850, t: 'Home Equity', c: '#5bc8f0', l: true }, { y: 1097, t: 'Savings', c: '#fdf0a8' }, { y: 1266, t: 'HSA', c: '#1f7a5a' }, { y: 1414, t: 'Set-Aside', c: '#a8904f' }, { y: 1621, t: 'Checking', c: '#c9cbe8' }]
const notes: [number, number, string, string][] = [
  [2218, 673, '$371,895.57', '2318,671 2326,671 2331,712'], [2214, 771, '$29,814.18', '2306,770 2314,770 2331,734'], [2213, 822, '$220,706.63', '2313,821 2322,821 2331,738'], [2213, 929, '$121,374.76', '2313,929 2322,929 2331,892'],
  [2209, 1087, '$13,541.62', '2300,1086 2310,1086 2331,1040'], [2215, 1308, '$4,372.57', '2296,1307 2306,1307 2330,1232'], [2221, 1449, '$2,504.34', '2302,1447 2311,1447 2330,1388'], [2225, 1600, '$9,395.65', '2306,1600 2316,1600 2332,1536'],
  [1038, 1252, '$4.02', '1034,1250 1023,1252 1018,1312'], [857, 1374, '$34.88', '853,1374 841,1376 837,1432'],
  [897, 1556, '$595.25', ''], [1037, 1551, '$905.76', ''], [1183, 1607, '$8.34', ''], [769, 1690, '$0.01', ''], [1322, 1554, '$697.59', ''], [1521, 1536, '$2,939.94', ''], [1659, 1540, '$2,366.03', ''], [1797, 1544, '$1,552.68', ''], [1941, 1551, '$855.94', ''], [2084, 1580, '$75.01', ''], [2217, 1551, '$920.68', ''],
]
const marks = [[2331, 713], [2331, 735], [2331, 889], [2331, 1040], [2330, 1231], [2330, 1387], [2332, 1534], [1018, 1312], [837, 1433], [879, 1570], [1018, 1563], [741, 1702], [1155, 1620], [1293, 1567], [1499, 1549], [1636, 1551], [1774, 1557], [1912, 1562], [2050, 1593], [2188, 1563]]
const cross = (x: number, y: number) => `M${X(x) - 3} ${Y(y) - 3}l6 6M${X(x) + 3} ${Y(y) - 3}l-6 6`
const gradients = [['gSav', '#fdf0a8'], ['gHsa', '#25a080'], ['gSet', '#a8904f'], ['gChk', '#9a9fe0']]
</script>

<template>
  <main class="desk">
    <section v-for="w in wins" :key="w.id" class="win" :class="w.id">
      <header class="menu">
        <nav class="menu-tabs">
          <button v-for="t in w.tabs" :key="t" class="menu-tab" :class="{ active: t === w.active, green: t === 'Table Design', file: t === 'File' }">{{ t }}</button>
        </nav>
        <button class="comments"><svg width="12" height="12" viewBox="0 0 12 12"><path d="M1 1h10v7H5l-3 3V8H1z" fill="none" stroke="#fff" /></svg>Comments</button>
        <button class="share"><svg width="12" height="14" viewBox="0 0 12 14"><path d="M4 5H1v8h9v-3M3 9c0-4 3-5 5-5V1l4 4l-4 4V6c-2 0-4 1-5 3z" fill="none" stroke="#0b2f1a" /></svg>Share<svg width="8" height="6" viewBox="0 0 8 6"><path d="M1 1l3 3l3-3" fill="none" stroke="#0b2f1a" stroke-width="1.500" /></svg></button>
      </header>

      <div class="ribbon">
        <div v-for="g in w.groups" :key="g.name" class="group" :style="{ width: g.w + 'px' }">
          <div class="group-body" :style="{ paddingLeft: g.pad + 'px' }">
            <template v-for="(col, ci) in g.cols" :key="ci">
              <button v-if="col.t === 'big'" class="big" :class="{ box: col.box }" :style="{ width: col.w + 'px' }">
                <svg width="30" height="30" viewBox="0 0 32 32" v-html="big[col.i ?? '']"></svg>
                <span v-for="(l, li) in col.lines" :key="li" class="big-line">{{ l }}<svg v-if="col.chev && li === (col.lines?.length ?? 0) - 1" class="chev" width="8" height="6" viewBox="0 0 8 6"><path d="M1 1l3 3l3-3" /></svg></span>
              </button>
              <i v-else-if="col.t === 'sep'" class="tall"></i>
              <div v-else-if="col.t === 'stack'" class="stack" :style="{ width: col.w + 'px' }">
                <template v-for="(it, ii) in col.items" :key="ii">
                  <label v-if="it.kind === 'check'" class="check" :class="{ off: it.off }"><input type="checkbox" checked :disabled="it.off">{{ it.l }}</label>
                  <button v-else class="tool" :class="{ off: it.off }" :style="it.w ? { width: it.w + 'px' } : {}" :aria-label="it.i">
                    <svg width="16" height="16" viewBox="0 0 20 20" v-html="small[it.i ?? '']"></svg><span v-if="it.l">{{ it.l }}</span>
                    <svg v-if="it.chev" class="chev end" width="8" height="6" viewBox="0 0 8 6"><path d="M1 1l3 3l3-3" /></svg>
                  </button>
                </template>
              </div>
              <div v-else class="rows" :style="{ width: col.w + 'px' }">
                <div v-for="(r, ri) in col.rows" :key="ri" class="tool-row">
                  <template v-for="(it, ii) in r" :key="ii">
                    <span v-if="it.kind === 'select'" class="pick" :style="{ width: it.w + 'px' }"><select :aria-label="it.name"><option>{{ it.l }}</option></select><svg class="chev" width="8" height="6" viewBox="0 0 8 6"><path d="M1 1l3 3l3-3" /></svg></span>
                    <i v-else-if="it.kind === 'sep'" class="short"></i>
                    <button v-else :class="[it.kind, { off: it.off, on: it.on }]" :style="it.w ? { width: it.w + 'px' } : {}" :aria-label="it.i">
                      <svg width="16" height="16" viewBox="0 0 20 20" v-html="small[it.i ?? '']"></svg><span v-if="it.l">{{ it.l }}</span>
                      <svg v-if="it.chev" class="chev end" width="8" height="6" viewBox="0 0 8 6"><path d="M1 1l3 3l3-3" /></svg>
                    </button>
                  </template>
                </div>
              </div>
            </template>
          </div>
          <div class="group-name">{{ g.name }}<button v-if="g.launch" class="launch" :class="g.launch" :aria-label="g.name + ' settings'"><svg width="8" height="8" viewBox="0 0 8 8"><path d="M1 8V1h6M3 3l4 4M7 4v3H4" fill="none" stroke="currentColor" /></svg></button></div>
        </div>
        <button class="collapse" aria-label="Collapse ribbon"><svg width="12" height="8" viewBox="0 0 12 8"><path d="M1 1l5 5l5-5" fill="none" stroke="#fff" stroke-width="1.500" /></svg></button>
      </div>

      <div class="formula">
        <div class="field name-box"><input :value="w.ref" aria-label="Name box"><svg width="10" height="7" viewBox="0 0 10 7"><path d="M1 1l4 4l4-4" fill="none" stroke="#ccc" /></svg></div>
        <span class="dots">⋮</span>
        <div class="field fx">
          <svg width="14" height="14" viewBox="0 0 14 14"><path d="M1 1l12 12M13 1L1 13" fill="none" stroke="#888" /></svg>
          <svg width="16" height="14" viewBox="0 0 16 14"><path d="M1 8l4 5L15 1" fill="none" stroke="#888" /></svg>
          <button class="fx-btn">fx</button>
          <svg width="10" height="7" viewBox="0 0 10 7"><path d="M1 1l4 4l4-4" fill="none" stroke="#ccc" /></svg>
        </div>
        <div class="field bar"><input aria-label="Formula"><svg width="10" height="7" viewBox="0 0 10 7"><path d="M1 1l4 4l4-4" fill="none" stroke="#ccc" /></svg></div>
      </div>

      <div class="work">
        <div class="sheet">
          <table>
            <colgroup><col v-for="(cw, i) in w.cols" :key="i" :style="{ width: cw + 'px' }"><col></colgroup>
            <thead><tr><th class="corner"><svg width="10" height="10" viewBox="0 0 10 10"><path d="M10 0v10H0z" fill="#777" /></svg></th><th v-for="l in w.letters" :key="l" :class="{ sel: l === w.sel }">{{ l }}</th><th></th></tr></thead>
            <tbody>
              <tr v-for="r in w.rows" :key="r.n" :class="r.k">
                <th :class="{ sel: w.sel && r.n === '19' }">{{ r.n }}</th>
                <td v-for="(d, di) in r.cells" :key="di" :class="d.k" :colspan="d.s"><span v-if="d.t" class="v">{{ d.t }}</span><button v-if="d.f" class="filter" :aria-label="'Filter ' + d.t"><svg width="13" height="10" viewBox="0 0 13 10"><path v-if="d.f === 'v'" d="M4 3h6l-3 4z" fill="#555" /><path v-else d="M1 5h5l-2.500 3z" fill="#555" /><path v-if="d.f === 'up'" d="M10 9V1M8 3l2-2l2 2" fill="none" stroke="#555" /><path v-if="d.f === 'down'" d="M10 1v8M8 7l2 2l2-2" fill="none" stroke="#555" /></svg></button></td>
              </tr>
            </tbody>
          </table>

          <svg v-if="w.id === 'one'" class="chart" width="949" height="402" viewBox="83 189 949 402">
            <defs>
              <linearGradient v-for="[id, col] in gradients" :id="id" :key="id" x1="0" y1="0" x2="0" y2="1"><stop offset="0" :stop-color="col" stop-opacity="0.040" /><stop offset="1" :stop-color="col" :stop-opacity="id === 'gSav' ? 0.160 : id === 'gSet' ? 0.120 : 0.400" /></linearGradient>
            </defs>
            <rect x="83" y="189" width="949" height="402" fill="#312f30" />
            <rect x="83" y="189" width="949" height="402" fill="none" stroke="#666" />
            <g v-for="(q, i) in panels" :key="i">
              <path v-for="m in months" :key="m" :d="`M${X(m - 543 + q.x)} ${Y(q.top)}V${Y(q.bottom)}`" stroke="#5c5a5b" />
              <path v-for="t in q.ticks.slice(1, -1)" :key="t[1]" :d="`M${X(q.x)} ${Y(t[0])}H${X(2333)}`" stroke="#5c5a5b" />
              <polygon v-if="q.fill" :points="`${line(q.pts)} ${X(2333)},${Y(q.bottom)} ${X(q.x)},${Y(q.bottom)}`" :fill="`url(#${q.fill})`" />
              <path :d="`M${X(q.x)} ${Y(q.top)}H${X(2333)}V${Y(q.bottom)}`" fill="none" stroke="#8a8a8a" />
              <polyline v-if="q.fill" :points="line(q.pts)" fill="none" :stroke="q.color" stroke-width="2" />
              <path :d="`M${X(q.x)} ${Y(q.top)}V${Y(q.bottom)}H${X(2333)}`" fill="none" stroke="#eee" />
              <text v-for="t in q.ticks" :key="t[0]" class="axis" :x="X(q.x - 18)" :y="Y(t[0]) + 3" text-anchor="end">{{ t[1] }}</text>
            </g>
            <polyline v-for="l in worth" :key="l.c" :points="line(l.d)" fill="none" :stroke="l.c" stroke-width="2" />
            <text v-for="(m, i) in months" :key="m" class="axis" :x="X(m - 4)" y="576" text-anchor="middle">{{ monthNames[i] }}</text>
            <g v-for="l in legend" :key="l.t">
              <path v-if="l.l" :d="`M91 ${Y(l.y)}h19`" :stroke="l.c" stroke-width="2" />
              <rect v-else x="91" :y="Y(l.y) - 2" width="5" height="5" fill="none" :stroke="l.c" stroke-width="1" />
              <text class="axis" :x="l.l ? 111 : 98" :y="Y(l.y) + 3">{{ l.t }}</text>
            </g>
            <path v-for="(m, i) in marks" :key="i" :d="cross(m[0], m[1])" stroke="#ddd" fill="none" />
            <g v-for="n in notes" :key="n[2]">
              <polyline v-if="n[3]" :points="line(n[3])" fill="none" stroke="#aaa" />
              <text class="note" :x="X(n[0])" :y="Y(n[1]) + 3">{{ n[2] }}</text>
            </g>
          </svg>
        </div>
        <div class="vscroll">
          <svg width="10" height="8" viewBox="0 0 10 8"><path d="M5 0l5 8H0z" fill="#999" /></svg>
          <div class="vtrack"><div class="vthumb" :style="{ marginTop: w.vTop + 'px', height: w.vSize + 'px' }"></div></div>
          <svg width="10" height="8" viewBox="0 0 10 8"><path d="M5 8l5-8H0z" fill="#999" /></svg>
        </div>
      </div>

      <footer class="sheets">
        <button class="arrow" aria-label="Previous sheet"><svg width="8" height="12" viewBox="0 0 8 12"><path d="M6 1L1 6l5 5" fill="none" stroke="#888" stroke-width="1.500" /></svg></button>
        <button class="arrow" aria-label="Next sheet"><svg width="8" height="12" viewBox="0 0 8 12"><path d="M1 1l5 5l-5 5" fill="none" stroke="#ddd" stroke-width="1.500" /></svg></button>
        <div class="sheet-tabs">
          <button v-for="s in w.sheets" :key="s" class="sheet-tab" :class="{ active: s === w.sheet }"><span>{{ s }}</span></button>
          <span v-if="w.more" class="more">{{ w.more }}</span>
        </div>
        <button class="extra">•••</button>
        <button class="extra plus" aria-label="New sheet"><svg width="12" height="12" viewBox="0 0 12 12"><path d="M6 0v12M0 6h12" stroke="#ddd" /></svg></button>
        <span class="extra">⋮</span>
        <div class="hscroll">
          <svg width="7" height="10" viewBox="0 0 7 10"><path d="M7 0v10L0 5z" fill="#999" /></svg>
          <div class="htrack"><div class="hthumb" :style="{ marginLeft: w.hStart + 'px', width: w.hSize + 'px' }"></div></div>
          <svg width="7" height="10" viewBox="0 0 7 10"><path d="M0 0v10l7-5z" fill="#999" /></svg>
        </div>
      </footer>
    </section>
  </main>
</template>

<style>
html, body { margin: 0; background: #0a0a0a; }
</style>

<style scoped>
* { box-sizing: border-box; }
.desk { display: grid; grid-template-columns: 1364fr 1365fr 1367fr; height: 100vh; overflow: hidden; color: #fff; font: 11px/16px "Open Sans", "Noto Sans", sans-serif; }
.win { --bg: #0a0a0a; display: flex; flex-direction: column; min-width: 0; min-height: 0; background: var(--bg); }
.win.two, .win.three { border-left: 1px solid #4a4a4a; }
.win.three { --bg: #06080d; }
button { font: inherit; color: inherit; background: none; border: 0; padding: 0; margin: 0; text-align: left; white-space: nowrap; }
svg { flex: none; display: block; overflow: visible; }
.chev { fill: none; stroke: #fff; stroke-width: 1.500; }

.menu { display: flex; align-items: center; height: 31px; flex: none; padding: 0 13px 0 18px; font-size: 13px; }
.one .menu { padding-left: 20px; }
.menu-tabs { display: flex; gap: 21px; flex: 1; }
.menu-tab { height: 24px; line-height: 20px; border-bottom: 2px solid transparent; padding-top: 2px; }
.menu-tab.file { margin-right: 3px; }
.menu-tab.active { font-weight: 600; border-color: #5ac37d; }
.menu-tab.green { color: #6cc48a; }
.comments, .share { display: flex; align-items: center; gap: 4px; height: 24px; border-radius: 3px; justify-content: center; }
.comments { width: 94px; border: 1px solid #777; background: #1b1b1b; margin-right: 8px; }
.share { width: 72px; background: #35a35a; color: #0b2f1a; gap: 5px; }

.ribbon { display: flex; height: 99px; flex: none; margin: 0 9px 0 7px; background: #292929; border-radius: 7px; position: relative; }
.group { flex: none; display: flex; flex-direction: column; position: relative; }
.group::after { content: ""; position: absolute; right: 0; top: 5px; bottom: 5px; border-right: 1px solid #5a5a5a; }
.group-body { display: flex; height: 82px; }
.group-name { height: 16px; text-align: center; position: relative; font-size: 10px; }
.launch { position: absolute; right: 4px; top: 5px; }
.launch.off { color: #666; }
.big { display: flex; flex-direction: column; align-items: center; padding-top: 9px; flex: none; }
.big > svg { margin-bottom: 2px; }
.big.box { border: 1px solid #9a9a9a; border-radius: 3px; margin-top: 4px; padding-top: 4px; height: 77px; background: #383838; }
.big-line { display: flex; align-items: center; gap: 4px; height: 16px; }
.tall { width: 1px; margin: 10px 4px 6px; background: #5a5a5a; flex: none; }
.short { width: 1px; height: 24px; background: #5a5a5a; flex: none; margin: 0 1px; }
.stack { padding: 4px 0 0; display: grid; grid-template-rows: repeat(3, 25px); flex: none; align-content: start; }
.tool { display: flex; align-items: center; gap: 4px; padding-left: 4px; }
.tool.off, .check.off { color: #6c6c6c; }
.tool .end { margin-left: auto; }
.stack .tool .end { margin-left: 4px; }
.stack .tool[style] .end { margin-left: auto; }
.check { display: flex; align-items: center; gap: 5px; padding-left: 4px; white-space: nowrap; }
.check input { appearance: none; width: 12px; height: 12px; margin: 0; border: 1px solid #aaa; border-radius: 2px; display: grid; place-items: center; flex: none; }
.check input::after { content: ""; width: 6px; height: 3px; border: solid #fff; border-width: 0 0 1px 1px; transform: rotate(-45deg); margin-bottom: 2px; }
.check.off input { border-color: #555; background: #111; opacity: 0.600; }
.rows { padding-top: 8px; flex: none; }
.tool-row { display: flex; align-items: center; height: 32px; gap: 0; }
.mini { display: flex; justify-content: center; align-items: center; height: 24px; }
.mini.on { border: 1px solid #aaa; border-radius: 3px; background: #383838; }
.drop { display: flex; align-items: center; gap: 6px; padding-left: 4px; height: 24px; }
.pick { position: relative; height: 24px; margin-right: 2px; }
.pick select { appearance: none; width: 100%; height: 24px; background: #292929; border: 1px solid #777; border-radius: 3px; color: #fff; font: inherit; padding: 0 2px; }
.pick .chev { position: absolute; right: 3px; top: 9px; }
.collapse { position: absolute; right: 10px; bottom: 9px; }

.formula { display: flex; height: 39px; flex: none; padding: 8px 9px 7px 7px; }
.field { display: flex; align-items: center; border: 1px solid #5e5e5e; border-radius: 4px; background: #292929; padding: 0 5px; }
.field input { flex: 1; min-width: 0; background: none; border: 0; padding: 0; color: #fff; font: inherit; font-size: 12px; outline: 0; }
.name-box { width: 193px; }
.dots { width: 20px; text-align: center; line-height: 24px; font-size: 14px; }
.fx { width: 85px; gap: 8px; margin-right: 5px; }
.fx-btn { font: italic 15px/20px "Liberation Serif", serif; color: #ddd; }
.fx svg:last-child { margin-left: auto; }
.bar { flex: 1; }

.work { display: flex; flex: 1; min-height: 0; }
.sheet { flex: 1; min-width: 0; overflow: hidden; position: relative; background: #3a3838; font: 9px/14px Lato, sans-serif; }
table { border-collapse: separate; border-spacing: 0; table-layout: fixed; width: 100%; }
tr { height: 16px; }
th, td { padding: 0 2px; overflow: hidden; white-space: nowrap; font-weight: 400; text-align: left; vertical-align: middle; }
thead th { height: 16px; background: #0a0a0a; color: #ddd; text-align: center; border-right: 1px solid #555; border-bottom: 1px solid #999; font-size: 10px; padding: 0; }
thead th:last-child { border-right: 0; }
.corner svg { margin: 2px 0 0 auto; }
tbody th { background: #0a0a0a; text-align: center; border-right: 1px solid #777; border-bottom: 1px solid #666; padding: 0; font-size: 10px; vertical-align: bottom; line-height: 15px; }
thead th.sel { background: #666; border-bottom-color: #1e7145; }
tbody th.sel { background: #666; border-right-color: #1e7145; }
td.r { text-align: right; }
td.m { text-align: center; }
td.b { font-weight: 700; }
.v { white-space: pre; }
.lt td { background: #3a3838; border-right: 1px solid #000; border-bottom: 1px solid #000; }
.dk td { background: #312f30; border-right: 1px solid #000; border-bottom: 1px solid #000; }
.dim td { color: #8a8a8a; }
.filter { position: absolute; right: 0; bottom: 1px; width: 17px; height: 17px; background: #f6f8fb; border: 1px solid #b5bcc6; display: flex; align-items: center; justify-content: center; }
.heads td { position: relative; }

.one .bx { border-right: 1px solid #000; border-bottom: 1px solid #000; background: #312f30; }
.one .edge { border-top: 1px solid #000; }
.one td.bx:nth-child(3) { border-left: 1px solid #000; }
.one .name { padding-left: 11px; }
.one .band { height: 22px; }
.one .band td { background: #242223; border-right: 1px solid #555; border-top: 1px solid #555; border-bottom: 1px solid #000; font-size: 10px; }
.one .rainy { padding-left: 178px; text-align: center; }
.one .heads { height: 61px; }
.one .hd { background: #312f30; border-right: 1px solid #000; border-bottom: 1px solid #000; text-align: center; font-weight: 700; vertical-align: bottom; line-height: 16px; }
.one .hd.navy { background: #20244a; }
.one tr td.bare { background: #3a3838; border: 0; border-right: 1px solid #000; }
.one .band td.bare { border-right: 1px solid #555; }
.double { height: 31px; }
.double td { line-height: 15px; }
.one td.gold { background: #6b5c38; }
.chart { position: absolute; left: 83px; top: 20px; }
.axis { font: 8px "Liberation Sans", sans-serif; fill: #fff; }
.note { font: 7px "Liberation Sans", sans-serif; fill: #fff; }

.two thead th { height: 19px; font-size: 11px; }
.two tbody tr { height: 19px; }
.two tbody tr:nth-child(5n) { height: 20px; }
.two tbody tr.heads { height: 41px; }
.two .heads td { background: #222649; font: 700 11px/19px Lato, sans-serif; vertical-align: top; border-right: 1px solid #000; border-bottom: 1px solid #aaa; }
.two tbody th { font-size: 11px; line-height: 17px; }
.two td { font-size: 10px; }
.two .txt { font-size: 11px; }
.two .id { font: 8px/14px "Liberation Sans", sans-serif; text-align: right; }
.two .july td { background: #242223; border-right: 1px solid #000; border-bottom: 1px solid #000; }
.two .june td { background: #2b292b; border-right: 1px solid #000; border-bottom: 1px solid #000; }
.two tbody tr td:nth-child(2) { border-right-color: #aaa; }
.two tbody tr td.bare { background: #3a3838; border-right: 0; border-bottom: 0; }
.two tr.transfer td { color: #21805a; }
.two tr td.calc { position: relative; font-style: italic; padding-right: 4px; border-color: #6b6b6b; box-shadow: -1px -1px 0 #6b6b6b; }

.three thead th { height: 15px; }
.three tbody tr { height: 17px; }
.three tbody tr:nth-child(5n) { height: 16px; }
.three tbody tr.heads { height: 72px; }
.three .heads .v { line-height: 16px; }
.three .navy { background: #191d33; }
.three .zl { background: #3a3838; }
.three .zd { background: #312f30; }
.three .yellow { color: #ffeb9c; font-size: 10px; }
.three .le { border-left: 1px solid #000; }
.three .re { border-right: 1px solid #000; }
.three .bo { border-bottom: 1px solid #000; }
.three .to { border-top: 1px solid #000; }
.three .bx { border-right: 1px solid #000; border-bottom: 1px solid #000; }
.three .bx.to { border-top: 1px solid #000; }
.three .input { background: #ffcc99; color: #3f3f76; border-right: 1px solid #7f7f7f; border-bottom: 1px solid #7f7f7f; font-size: 10px; }
.three .output { background: #f2f2f2; color: #fa7d00; border-right: 1px solid #7f7f7f; border-bottom: 1px solid #7f7f7f; font-size: 10px; font-weight: 700; }
.three .input.acct { padding-right: 6px; }
.three .faded { color: #a9a19b; }
.three .spill { overflow: visible; }
.three .over .v { display: flex; justify-content: flex-end; overflow: hidden; }
.three .tri { background-image: linear-gradient(135deg, #107c10 4px, transparent 4px); }
.three .arial { font: 9px/14px "Liberation Sans", sans-serif; }
.three .clip { padding-right: 0; }
.three .picked { border: 1px solid #fff; outline: 2px solid #1e7145; outline-offset: -1px; }

.vscroll { width: 21px; flex: none; display: flex; flex-direction: column; align-items: center; padding: 5px 0 3px; background: #101010; }
.vtrack { flex: 1; width: 9px; padding-top: 4px; }
.vthumb { background: #9a9a9a; border-radius: 4px; }

.sheets { display: flex; align-items: center; height: 27px; flex: none; padding: 0 19px 0 16px; font-size: 13px; border-top: 1px solid #444; }
.arrow { width: 32px; display: flex; padding-left: 9px; padding-top: 2px; }
.sheet-tabs { display: flex; height: 26px; padding-left: 35px; }
.sheet-tab { padding: 2px 13px 0; line-height: 24px; height: 26px; position: relative; }
.sheet-tab::after { content: ""; position: absolute; right: 0; top: 6px; bottom: 0; border-right: 1px solid #666; }
.sheet-tab:last-child { padding-right: 4px; }
.sheet-tab:last-child::after { border: 0; }
.sheet-tab.active { padding: 0 4px; color: #222; font-weight: 600; }
.sheet-tab.active span { display: block; background: #fff; padding: 0 8px; height: 26px; border-radius: 0 0 3px 3px; box-shadow: inset 0 -2px 0 #107c41; }
.sheet-tab.active::after { border: 0; }
.more { padding: 2px 0 0 12px; line-height: 24px; }
.extra { width: 33px; text-align: center; font-size: 10px; display: flex; justify-content: center; }
.hscroll { flex: 1; display: flex; align-items: center; height: 20px; padding: 0 4px; background: #141414; border-radius: 10px; }
.htrack { flex: 1; }
.hthumb { height: 9px; border-radius: 4px; background: #9a9a9a; }
</style>
